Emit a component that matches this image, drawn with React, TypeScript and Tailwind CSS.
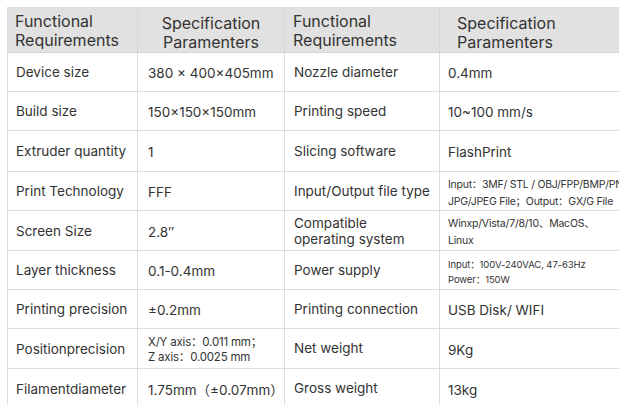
import React from "react";

type Row = {
  h: string;
  c1: React.ReactNode;
  c2: React.ReactNode;
  c3: React.ReactNode;
  c4: React.ReactNode;
};

const rows: Row[] = [
  { h: "h-[39px]", c1: "Device size", c2: "380 × 400×405mm", c3: "Nozzle diameter", c4: "0.4mm" },
  { h: "h-[39px]", c1: "Build size", c2: "150×150×150mm", c3: "Printing speed", c4: "10~100 mm/s" },
  { h: "h-[41px]", c1: "Extruder quantity", c2: "1", c3: "Slicing software", c4: "FlashPrint" },
  {
    h: "h-[39px]",
    c1: "Print Technology",
    c2: "FFF",
    c3: "Input/Output file type",
    c4: (
      <div className="text-[10.5px] leading-[17px] whitespace-nowrap tracking-[-0.25px]">
        <div>Input：3MF/ STL / OBJ/FPP/BMP/PNG</div>
        <div>JPG/JPEG File；Output：GX/G File</div>
      </div>
    ),
  },
  {
    h: "h-[40px]",
    c1: "Screen Size",
    c2: "2.8″",
    c3: (
      <div className="leading-[16px]">
        <div>Compatible</div>
        <div>operating system</div>
      </div>
    ),
    c4: (
      <div className="text-[10.5px] leading-[17px] whitespace-nowrap tracking-[-0.2px]">
        <div>Winxp/Vista/7/8/10、MacOS、</div>
        <div>Linux</div>
      </div>
    ),
  },
  {
    h: "h-[39px]",
    c1: "Layer thickness",
    c2: "0.1-0.4mm",
    c3: "Power supply",
    c4: (
      <div className="text-[9.5px] leading-[15px] whitespace-nowrap tracking-[-0.1px]">
        <div>Input：100V-240VAC, 47-63Hz</div>
        <div>Power：150W</div>
      </div>
    ),
  },
  { h: "h-[39px]", c1: "Printing precision", c2: "±0.2mm", c3: "Printing connection", c4: "USB Disk/ WIFI" },
  {
    h: "h-[40px]",
    c1: "Positionprecision",
    c2: (
      <div className="text-[11.5px] leading-[15px] whitespace-nowrap tracking-[-0.2px]">
        <div>X/Y axis：0.011 mm；</div>
        <div>Z axis：0.0025 mm</div>
      </div>
    ),
    c3: "Net weight",
    c4: "9Kg",
  },
  { h: "h-[40px]", c1: "Filamentdiameter", c2: "1.75mm（±0.07mm）", c3: "Gross weight", c4: "13kg" },
];

export default function App() {
  return (
    <div
      className="w-[619px] h-[405px] overflow-hidden bg-white pl-[7px] pt-[7px] text-[#333333]"
      style={{ fontFamily: "Inter, 'Noto Sans CJK SC', sans-serif" }}
    >
      <div className="w-[700px] border-l border-t border-[#dcdcdc]">
        <div className="flex h-[45px] bg-[#e1e1e1] border-b border-[#d4d4d4] text-[16px] leading-[19px]">
          <div className="w-[130px] pl-[7px] pt-[4px] border-r border-[#d8d8d8]">
            <div>Functional</div>
            <div>Requirements</div>
          </div>
          <div className="w-[147px] pt-[6px] border-r border-[#d8d8d8] text-center">
            <div>Specification</div>
            <div>Paramenters</div>
          </div>
          <div className="w-[155px] pl-[8px] pt-[4px] border-r border-[#d8d8d8]">
            <div>Functional</div>
            <div>Requirements</div>
          </div>
          <div className="flex-1 pl-[17px] pt-[6px]">
            <div>Specification</div>
            <div>Paramenters</div>
          </div>
        </div>
        {rows.map((r, i) => (
          <div key={i} className={`flex ${r.h} border-b border-[#dcdcdc] text-[13.5px]`}>
            <div className="w-[130px] pl-[8px] pt-[1px] flex items-center border-r border-[#dcdcdc] whitespace-nowrap">
              {r.c1}
            </div>
            <div className="w-[147px] pl-[10px] pt-[3px] flex items-center border-r border-[#dcdcdc] whitespace-nowrap">
              {r.c2}
            </div>
            <div className="w-[155px] pl-[9px] flex items-center border-r border-[#dcdcdc] whitespace-nowrap">
              {r.c3}
            </div>
            <div className="flex-1 pl-[8px] pt-[3px] flex items-center whitespace-nowrap">{r.c4}</div>
          </div>
        ))}
      </div>
    </div>
  );
}
